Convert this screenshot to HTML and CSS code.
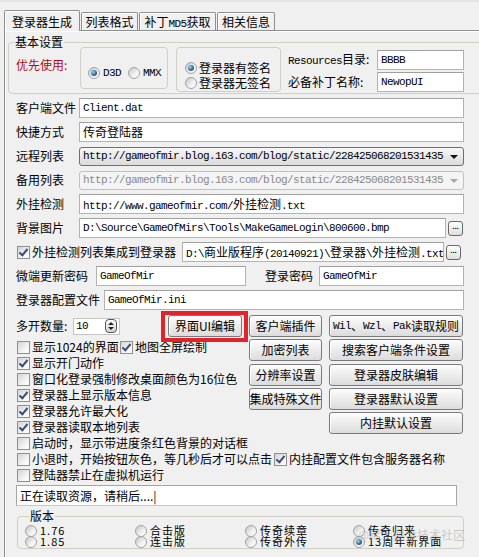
FILE: index.html
```html
<!DOCTYPE html>
<html lang="zh-CN">

<head>
    <meta charset="UTF-8">
    <meta name="viewport" content="width=device-width, initial-scale=1.0">
    <title>登录器生成</title>
    <link rel="stylesheet" href="styles.css">
</head>

<body>
    <div class="topbar"></div>
    <div class="tabs">
        <div class="tab active">登录器生成</div>
        <div class="tab t2">列表格式</div>
        <div class="tab t3">补丁<span class="asc">MD5</span>获取</div>
        <div class="tab t4">相关信息</div>
    </div>

    <div class="panel">
        <fieldset class="basic">
            <legend>基本设置</legend>
            <div class="basic-row">
                <span class="prefer">优先使用:</span>
                <div class="subgroup render">
                    <div class="opt"><span class="radio on"></span><span class="asc">D3D</span></div>
                    <div class="opt"><span class="radio"></span><span class="asc">MMX</span></div>
                </div>
                <div class="subgroup sign">
                    <div class="opt"><span class="radio on"></span>登录器有签名</div>
                    <div class="opt"><span class="radio"></span>登录器无签名</div>
                </div>
                <div class="res">
                    <span><span class="asc">Resources</span>目录:</span>
                    <div class="edit">BBBB</div>
                    <span>必备补丁名称:</span>
                    <div class="edit">NewopUI</div>
                </div>
            </div>
        </fieldset>

        <div class="field">
            <span class="lbl">客户端文件</span>
            <div class="edit wide">Client.dat</div>
        </div>
        <div class="field">
            <span class="lbl">快捷方式</span>
            <div class="edit wide"><span class="cj">传奇登陆器</span></div>
        </div>
        <div class="field">
            <span class="lbl">远程列表</span>
            <div class="combo">
                <span class="combo-text">http://gameofmir.blog.163.com/blog/static/228425068201531435</span>
                <span class="arrow"></span>
            </div>
        </div>
        <div class="field">
            <span class="lbl">备用列表</span>
            <div class="combo off">
                <span class="combo-text">http://gameofmir.blog.163.com/blog/static/228425068201531435</span>
                <span class="arrow"></span>
            </div>
        </div>
        <div class="field">
            <span class="lbl">外挂检测</span>
            <div class="edit wide">http://www.gameofmir.com/<span class="cj">外挂检测</span>.txt</div>
        </div>
        <div class="field">
            <span class="lbl">背景图片</span>
            <div class="edit bg-path">D:\Source\GameOfMirs\Tools\MakeGameLogin\800600.bmp</div>
            <div class="dots">...</div>
        </div>
        <div class="field">
            <span class="chk on first"></span>
            <span class="chk-text">外挂检测列表集成到登录器</span>
            <div class="edit plug-path">D:\<span class="cj">商业版程序</span>(20140921)\<span class="cj">登录器</span>\<span class="cj">外挂检测</span>.txt</div>
            <div class="dots">...</div>
        </div>
        <div class="field">
            <span class="lbl lbl-w80">微端更新密码</span>
            <div class="edit pw1">GameOfMir</div>
            <span class="lbl pw-lbl">登录密码</span>
            <div class="edit pw2">GameOfMir</div>
        </div>
        <div class="field">
            <span class="lbl lbl-w88">登录器配置文件</span>
            <div class="edit cfg">GameOfMir.ini</div>
        </div>

        <div class="lower">
            <div class="left">
                <div class="spin-row">
                    <span class="spin-lbl">多开数量:</span>
                    <div class="spin">
                        <span class="asc">10</span>
                        <span class="spin-btn"><span class="up"></span><span class="dn"></span></span>
                    </div>
                    <div class="btn ui-btn">界面UI编辑</div>
                </div>
                <div class="cb first-cb">
                    <span class="chk"></span><span class="chk-text w1">显示1024的界面</span>
                    <span class="chk on"></span><span class="chk-text">地图全屏绘制</span>
                </div>
                <div class="cb"><span class="chk on"></span><span class="chk-text">显示开门动作</span></div>
                <div class="cb"><span class="chk"></span><span class="chk-text">窗口化登录强制修改桌面颜色为16位色</span></div>
                <div class="cb"><span class="chk on"></span><span class="chk-text">登录器上显示版本信息</span></div>
                <div class="cb"><span class="chk on"></span><span class="chk-text">登录器允许最大化</span></div>
                <div class="cb"><span class="chk on"></span><span class="chk-text">登录器读取本地列表</span></div>
            </div>
            <div class="btn-grid">
                <div class="btn">客户端插件</div>
                <div class="btn"><span class="asc">Wil</span>、<span class="asc">Wzl</span>、<span class="asc">Pak</span>读取规则</div>
                <div class="btn">加密列表</div>
                <div class="btn">搜索客户端条件设置</div>
                <div class="btn">分辨率设置</div>
                <div class="btn">登录器皮肤编辑</div>
                <div class="btn">集成特殊文件</div>
                <div class="btn">登录器默认设置</div>
                <div class="btn col-b">内挂默认设置</div>
            </div>
        </div>

        <div class="cb"><span class="chk"></span><span class="chk-text">启动时，显示带进度条红色背景的对话框</span></div>
        <div class="cb">
            <span class="chk"></span><span class="chk-text">小退时，开始按钮灰色，等几秒后才可以点击</span>
            <span class="chk on gap8"></span><span class="chk-text">内挂配置文件包含服务器名称</span>
        </div>
        <div class="cb"><span class="chk"></span><span class="chk-text">登陆器禁止在虚拟机运行</span></div>

        <div class="memo">正在读取资源，请稍后....|</div>

        <fieldset class="version">
            <legend>版本</legend>
            <div class="ver-grid">
                <div class="opt"><span class="radio"></span>1.76</div>
                <div class="opt"><span class="radio"></span>合击版</div>
                <div class="opt"><span class="radio"></span>传奇续章</div>
                <div class="opt"><span class="radio"></span>传奇归来</div>
                <div class="opt"><span class="radio"></span>1.85</div>
                <div class="opt"><span class="radio"></span>连击版</div>
                <div class="opt"><span class="radio"></span>传奇外传</div>
                <div class="opt"><span class="radio on"></span>13周年新界面</div>
            </div>
            <span class="watermark">@稀土掘金技术社区</span>
        </fieldset>
    </div>
</body>

</html>
```

FILE: styles.css
```css
body {
    margin: 0;
    width: 479px;
    height: 557px;
    overflow: hidden;
    background: #f0f0f0;
    color: #000;
    font-family: "Noto Sans CJK SC", "Liberation Sans", sans-serif;
    font-size: 12px;
    line-height: 14px;
}

.asc {
    font-family: "Liberation Mono", monospace;
    font-size: 11px;
    letter-spacing: -0.6px;
}

.cj {
    font-family: "Noto Sans CJK SC", sans-serif;
    font-size: 12px;
    letter-spacing: 0;
}

/* tabs */
.topbar {
    height: 10px;
    box-sizing: border-box;
    border-top: 2px solid #e4e4e4;
}

.tabs {
    display: flex;
    align-items: flex-end;
    gap: 1px;
    height: 20px;
    padding-left: 4px;
}

.tab {
    box-sizing: border-box;
    height: 18px;
    border: 1px solid #8e8f8f;
    border-bottom: none;
    border-radius: 2px 2px 0 0;
    background: #f0f0f0;
    box-shadow: inset 1px 1px #fff;
    text-align: center;
    line-height: 18px;
    white-space: nowrap;
}

.tab.active {
    position: relative;
    z-index: 1;
    width: 76px;
    height: 21px;
    margin-bottom: -1px;
    padding-top: 2px;
}

.t2 { width: 57px; }
.t3 { width: 77px; }
.t4 { width: 58px; }

.panel {
    margin-left: 4px;
    height: 540px;
    padding-left: 11px;
    border-left: 1px solid #8e8f8f;
    border-top: 1px solid #8e8f8f;
    box-shadow: inset 1px 1px #fff;
}

/* group boxes */
fieldset {
    margin: 0;
    padding: 0;
    border: 1px solid #cfcfc4;
    border-radius: 4px;
    min-width: 0;
}

legend {
    padding: 0 1px;
    line-height: 14px;
}

.basic {
    width: 480px;
    margin: 4px 0 0 -8px;
}

.basic legend {
    margin-left: 5px;
}

.basic-row {
    display: flex;
    align-items: flex-start;
    height: 46px;
    margin-top: -2px;
}

.prefer {
    width: 64px;
    margin: 11px 0 0 7px;
    color: #b40c0c;
}

.subgroup {
    box-sizing: border-box;
    display: flex;
    border: 1px solid #cfcfc4;
    border-radius: 4px;
}

.render {
    width: 88px;
    height: 42px;
    padding: 18px 0 0 7px;
}

.render .opt:first-child {
    width: 40px;
}

.sign {
    flex-direction: column;
    width: 105px;
    height: 45px;
    margin-left: 8px;
    padding: 12px 0 0 8px;
}

.sign .opt {
    gap: 2px;
    height: 15px;
}

.opt {
    display: flex;
    align-items: center;
    gap: 3px;
    height: 14px;
    white-space: nowrap;
}

.res {
    display: grid;
    grid-template-columns: 89px 87px;
    grid-auto-rows: 20px;
    row-gap: 2px;
    align-items: center;
    margin: 3px 0 0 7px;
}

/* radios & checkboxes */
.radio {
    flex: none;
    display: flex;
    align-items: center;
    justify-content: center;
    width: 12px;
    height: 12px;
    box-sizing: border-box;
    border: 1px solid #a2a2a2;
    border-radius: 50%;
    background: linear-gradient(135deg, #c6c6c6, #f2f2f2 60%, #fff);
}

.radio.on::after {
    content: "";
    width: 6px;
    height: 6px;
    border-radius: 50%;
    background: radial-gradient(circle at 35% 35%, #a8d4ee, #2e6d9c 55%, #173c62);
}

.chk {
    flex: none;
    position: relative;
    width: 13px;
    height: 13px;
    box-sizing: border-box;
    border: 1px solid #8f8f8f;
    background: linear-gradient(135deg, #d4d4d4, #f6f6f6 70%, #fff);
}

.chk.on::after {
    content: "";
    position: absolute;
    left: 3px;
    top: 0;
    width: 3px;
    height: 7px;
    border: solid #3c4c7c;
    border-width: 0 2px 2px 0;
    transform: rotate(40deg);
}

.chk.first {
    margin-left: 1px;
}

.chk-text {
    margin-left: 2px;
    white-space: nowrap;
}

/* edit rows */
.field {
    display: flex;
    align-items: center;
    height: 20px;
    margin-top: 4px;
}

.lbl {
    flex: none;
    width: 63px;
    white-space: nowrap;
}

.lbl-w80 { width: 80px; }
.lbl-w88 { width: 88px; }

.pw-lbl {
    width: 54px;
    margin-left: 19px;
}

.edit {
    flex: none;
    box-sizing: border-box;
    height: 20px;
    padding-left: 3px;
    border: 1px solid #b2b2b2;
    border-top-color: #a0a0a0;
    background: #fff;
    font-family: "Liberation Mono", "Noto Sans CJK SC", monospace;
    font-size: 11px;
    letter-spacing: -0.6px;
    line-height: 18px;
    white-space: nowrap;
    overflow: hidden;
}

.wide { width: 385px; }
.bg-path { width: 367px; }
.plug-path { width: 262px; margin-left: 6px; }
.pw1 { width: 150px; }
.pw2 { width: 145px; }
.cfg { width: 360px; }

.combo {
    display: flex;
    align-items: center;
    box-sizing: border-box;
    width: 385px;
    height: 19px;
    padding-left: 3px;
    border: 1px solid #707070;
    border-radius: 3px;
    background: linear-gradient(#f7f7f7, #e9e9e9 50%, #dcdcdc);
}

.combo-text {
    flex: 1;
    overflow: hidden;
    white-space: nowrap;
    font-family: "Liberation Mono", monospace;
    font-size: 11px;
    letter-spacing: -0.6px;
}

.arrow {
    flex: none;
    width: 0;
    height: 0;
    margin: 1px 5px 0 6px;
    border-left: 4px solid transparent;
    border-right: 4px solid transparent;
    border-top: 4px solid #111;
}

.combo.off {
    border-color: #c2c2c2;
    background: #f4f4f4;
    color: #8a8a8a;
}

.combo.off .arrow {
    border-top-color: #a8a8a8;
}

.dots {
    flex: none;
    box-sizing: border-box;
    width: 15px;
    height: 15px;
    margin-left: 2px;
    border: 1px solid #6a6a6a;
    border-radius: 3px;
    background: linear-gradient(#fff, #dedede);
    font-family: "Liberation Sans", sans-serif;
    font-size: 8px;
    font-weight: bold;
    line-height: 10px;
    letter-spacing: 0;
    text-align: center;
}

/* buttons */
.btn {
    display: flex;
    align-items: center;
    justify-content: center;
    box-sizing: border-box;
    height: 22px;
    border: 1px solid #7a7a7a;
    border-radius: 3px;
    background: linear-gradient(#fdfdfd, #ececec 50%, #dcdcdc);
    box-shadow: inset 1px 1px #fff;
    white-space: nowrap;
}

.lower {
    display: flex;
    margin-top: 5px;
}

.left {
    width: 233px;
}

.spin-row {
    display: flex;
    align-items: center;
    height: 22px;
}

.spin-lbl {
    width: 57px;
    white-space: nowrap;
}

.spin {
    display: flex;
    align-items: center;
    justify-content: space-between;
    box-sizing: border-box;
    width: 47px;
    height: 17px;
    padding: 0 2px;
    border: 1px solid #c4c4c4;
    background: #fff;
}

.spin-btn {
    display: flex;
    flex-direction: column;
    align-items: center;
    justify-content: center;
    gap: 2px;
    box-sizing: border-box;
    width: 12px;
    height: 14px;
    border: 1px solid #555;
    border-radius: 4px;
    background: linear-gradient(#fff, #d4d4d4);
}

.up,
.dn {
    width: 0;
    height: 0;
    border-left: 3px solid transparent;
    border-right: 3px solid transparent;
}

.up { border-bottom: 3px solid #222; }
.dn { border-top: 3px solid #222; }

.ui-btn {
    position: relative;
    width: 74px;
    margin-left: 48px;
}

/* red annotation frame */
.ui-btn::after {
    content: "";
    position: absolute;
    left: -8px;
    top: -5px;
    right: -7px;
    bottom: -6px;
    border: 4px solid #e3222b;
}

.btn-grid {
    display: grid;
    grid-template-columns: 73px 134px;
    grid-auto-rows: 22px;
    column-gap: 7px;
    row-gap: 2.3px;
}

.col-b {
    grid-column: 2;
}

.cb {
    display: flex;
    align-items: center;
    height: 16px;
}

.cb .chk {
    margin-left: 1px;
}

.first-cb {
    margin-top: 2px;
}

.cb .w1 {
    width: 86px;
}

.cb .chk.on:nth-child(3) {
    margin-left: 2px;
}

.cb .gap8 {
    margin-left: 6px;
}

.memo {
    box-sizing: border-box;
    width: 441px;
    height: 21px;
    margin-top: 2px;
    padding-left: 3px;
    border: 1px solid #a6a6a6;
    border-bottom-color: #c8c8c8;
    background: #fff;
    line-height: 19px;
}

.version {
    position: relative;
    width: 447px;
    margin: 3px 0 0 1px;
    padding: 2px 0 1px 7px;
    box-sizing: border-box;
}

.version legend {
    margin-left: 4px;
}

.ver-grid {
    display: grid;
    grid-template-columns: 110px 110px 108px auto;
    grid-auto-rows: 11px;
}

.ver-grid .opt {
    height: 11px;
    font-size: 11px;
    line-height: 11px;
    letter-spacing: 1px;
}

.watermark {
    position: absolute;
    right: -2px;
    bottom: 6px;
    color: rgba(150, 150, 150, 0.45);
    white-space: nowrap;
}
```
